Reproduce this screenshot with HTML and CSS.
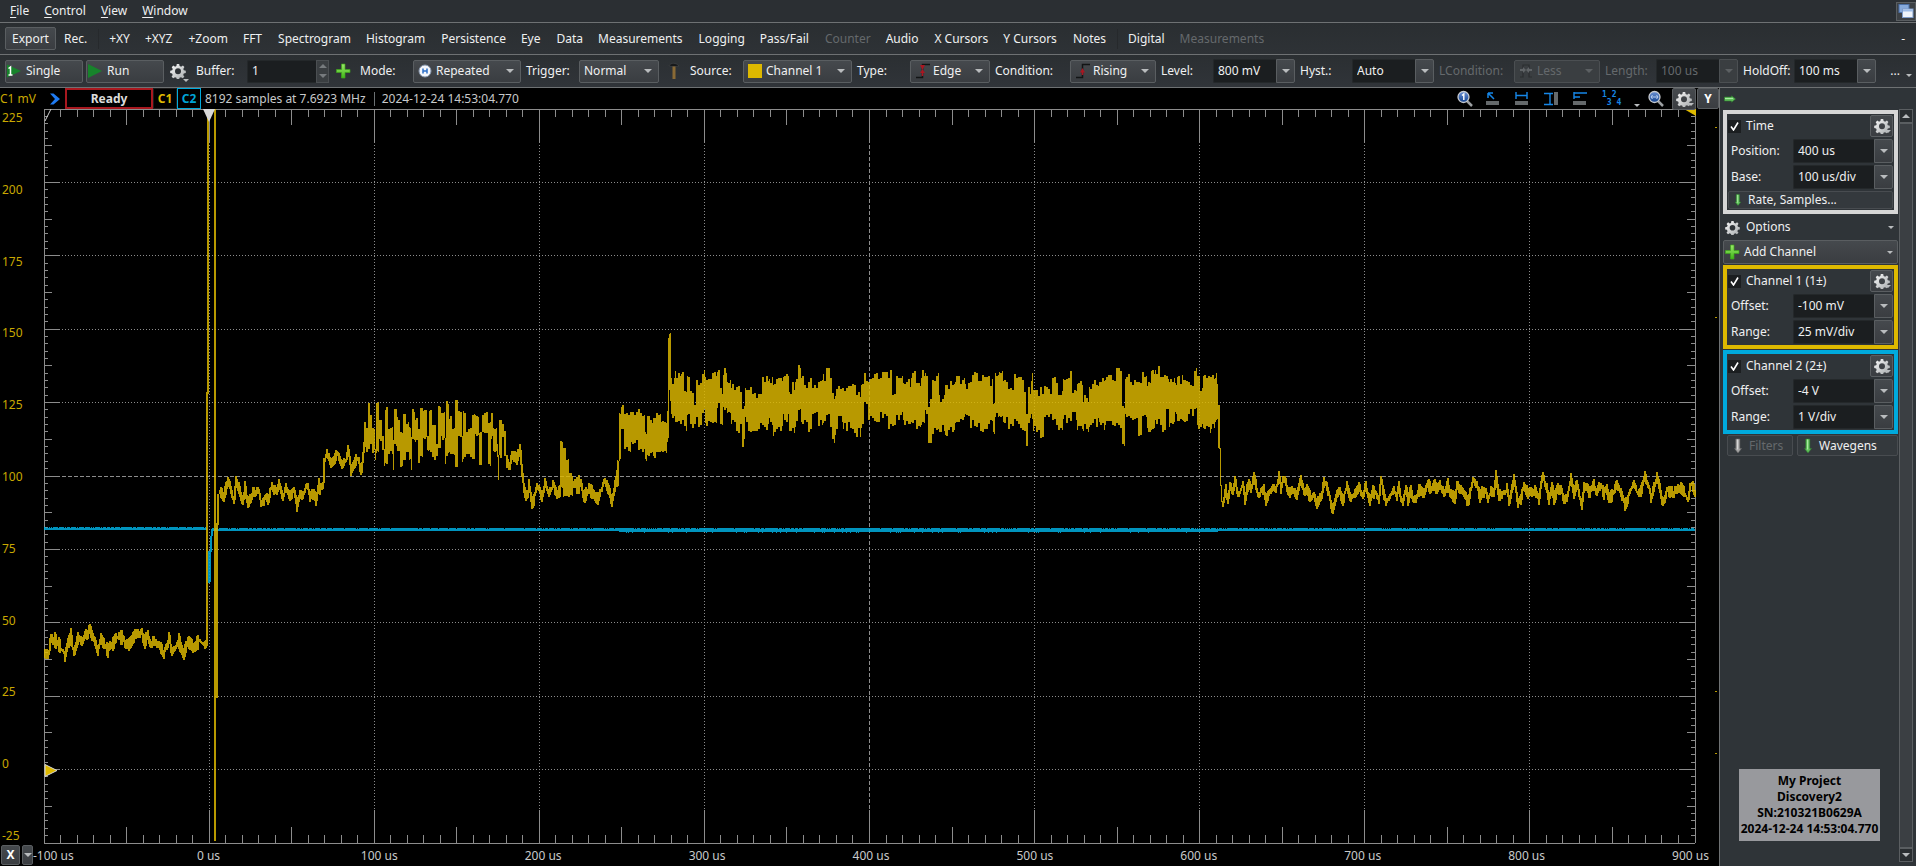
FILE: index.html
```html
<!DOCTYPE html>
<html lang="en">
<head>
<meta charset="utf-8">
<title>Scope</title>
<link rel="stylesheet" href="styles.css">
</head>
<body>
<svg class="defs" aria-hidden="true">
  <defs>
    <linearGradient id="metal" x1="0" y1="0" x2="1" y2="1"><stop offset="0" stop-color="#fafafa"/><stop offset="1" stop-color="#a4a8aa"/></linearGradient>
    <linearGradient id="leaf" x1="0" y1="0" x2="0" y2="1"><stop offset="0" stop-color="#9be86a"/><stop offset="1" stop-color="#3fb618"/></linearGradient>
    <linearGradient id="lens" x1="0" y1="0" x2="0" y2="1"><stop offset="0" stop-color="#6d93d6"/><stop offset="1" stop-color="#0f3f8c"/></linearGradient>
    <symbol id="gear" viewBox="0 0 16 16">
      <path d="M6.800 1h2.400l.4 2 1.500.7 1.800-1.200 1.500 1.600-1.100 1.800.5 1.400 2 .5v2.300l-2 .4-.6 1.500 1.200 1.700-1.700 1.600-1.700-1.100-1.500.6-.4 2H6.900l-.5-2-1.400-.6-1.800 1.100-1.600-1.600 1.100-1.800-.6-1.400-1.900-.4V7.800l2-.5.6-1.400L1.700 4.200l1.600-1.700 1.800 1.200 1.300-.6zM8 5.300a3 3 0 1 0 0 6 3 3 0 0 0 0-6z" fill="url(#metal)" fill-rule="evenodd"/>
    </symbol>
    <symbol id="drop" viewBox="0 0 6 3"><path d="M0 0h6L3 3z" fill="#b9bcbe"/></symbol>
    <symbol id="plus" viewBox="0 0 16 16"><path d="M6.500 1h3.500v5.500h5v3h-5V15H6.500V9.500h-5v-3h5z" fill="url(#leaf)" stroke="#3da51b" stroke-width=".7"/></symbol>
    <symbol id="arrow-down" viewBox="0 0 10 16"><path d="M2.800 1h4v9.500H8.500L5 15 1.500 10.500h1.300z" fill="#5fc05a" stroke="#2f7d2f" stroke-width=".6"/><path d="M4.600 1.500v10" stroke="#a9e9a2" stroke-width="1.200"/></symbol>
  </defs>
</svg>

<header>
  <nav class="menubar">
    <button><u>F</u>ile</button><button><u>C</u>ontrol</button><button><u>V</u>iew</button><button><u>W</u>indow</button>
    <button class="win-btn" aria-label="Windows"><svg width="16" height="16" viewBox="0 0 16 16"><rect x="1" y="1.500" width="10" height="8" fill="#86a9da" stroke="#4b6fa5"/><rect x="4.500" y="6" width="10.500" height="8.500" fill="#eef3fa" stroke="#7f9cc9"/><path d="M5 7.500h10" stroke="#9dbbe6" stroke-width="2"/></svg></button>
  </nav>
  <nav class="views">
    <button class="raised">Export</button><button>Rec.</button><i class="sep"></i>
    <button>+XY</button><button>+XYZ</button><button>+Zoom</button><button>FFT</button><button>Spectrogram</button><button>Histogram</button><button>Persistence</button><button>Eye</button><button>Data</button><button>Measurements</button><button>Logging</button><button>Pass/Fail</button><button disabled>Counter</button><button>Audio</button><button>X Cursors</button><button>Y Cursors</button><button>Notes</button><i class="sep"></i><button>Digital</button><button disabled>Measurements</button>
    <span class="more">-</span>
  </nav>
  <div class="controls">
    <button class="raised run"><svg width="16" height="16" viewBox="0 0 16 16"><path d="M1 1.500v13L15 8z" fill="#17832b"/><path d="M2.500 5.500l2-1.500v8M2.500 12h4" stroke="#fff" stroke-width="1.500" fill="none"/></svg>Single</button>
    <button class="raised run"><svg width="16" height="16" viewBox="0 0 16 16"><path d="M1 1v14L15 8z" fill="#17832b"/></svg>Run</button>
    <button class="icon gear"><svg width="16" height="16"><use href="#gear"/></svg><svg class="corner" width="6" height="3"><use href="#drop"/></svg></button>
    <label class="l-buffer" for="buffer">Buffer:</label>
    <span class="spin"><input id="buffer" value="1"><button aria-label="Step"><svg width="8" height="16" viewBox="0 0 8 16"><path d="M0 5h8L4 1zM0 11h8l-4 4z" fill="#777b7e"/></svg></button></span>
    <button class="icon add" aria-label="Add buffer"><svg width="16" height="16"><use href="#plus"/></svg></button>
    <label class="l-mode" for="mode">Mode:</label>
    <span class="pick w108"><svg width="14" height="14" viewBox="0 0 14 14"><circle cx="7" cy="7" r="6" fill="#f3f6fb" stroke="#8797ad"/><path d="M5 4.500v5M9 4.500v5M5 7h4" stroke="#2c6fc7" stroke-width="1.500"/></svg><select id="mode" class="iconic"><option>Repeated</option></select></span>
    <label class="l-trigger" for="trigger">Trigger:</label>
    <span class="pick w80"><select id="trigger"><option>Normal</option></select></span>
    <svg class="hammer" width="12" height="18" viewBox="0 0 12 18"><path d="M1 3.500C3 .5 8 .5 11 4L8 4.500H3z" fill="#17191b" stroke="#45484b" stroke-width=".6"/><path d="M4.500 4.500h3V17h-3z" fill="#8a6a35"/></svg>
    <label class="l-source" for="source">Source:</label>
    <span class="pick w109"><i class="swatch"></i><select id="source" class="iconic"><option>Channel 1</option></select></span>
    <label class="l-type" for="type">Type:</label>
    <span class="pick w80"><svg width="16" height="16" viewBox="0 0 16 16"><path d="M1 14.500h6.500v-13H15" fill="none" stroke="#121415" stroke-width="1.500"/><path d="M5 2l5 0-2.500 5zM7.500 6l2.500 4H8.300v3H6.700v-3H5z" fill="#a81722"/></svg><select id="type" class="iconic"><option>Edge</option></select></span>
    <label class="l-cond" for="cond">Condition:</label>
    <span class="pick w86"><svg width="16" height="16" viewBox="0 0 16 16"><path d="M1 14.500h6.500v-13H15" fill="none" stroke="#121415" stroke-width="1.500"/><path d="M7.500 5l2.500 4.500H8.300V12H6.700V9.500H5z" fill="#a81722"/></svg><select id="cond" class="iconic"><option>Rising</option></select></span>
    <label class="l-level" for="level">Level:</label>
    <span class="combo"><input id="level" value="800 mV"><button aria-label="Level list"></button></span>
    <label class="l-hyst" for="hyst">Hyst.:</label>
    <span class="combo"><input id="hyst" value="Auto"><button aria-label="Hysteresis list"></button></span>
    <label class="l-lcond off" for="lcond">LCondition:</label>
    <span class="pick w86 off"><svg width="14" height="16" viewBox="0 0 14 16"><path d="M1 14h3V9M4 5V2h6v3M10 9v5h3" fill="none" stroke="#2b2e30" stroke-width="1.200"/><path d="M1 6h3V4l3 3 3-3v2h3v2h-3v2L7 7l-3 3V8H1z" fill="#606467"/></svg><select id="lcond" class="iconic" disabled><option>Less</option></select></span>
    <label class="l-length off" for="length">Length:</label>
    <span class="combo off"><input id="length" value="100 us" disabled><button aria-label="Length list" disabled></button></span>
    <label class="l-hold" for="hold">HoldOff:</label>
    <span class="combo"><input id="hold" value="100 ms"><button aria-label="HoldOff list"></button></span>
    <button class="more dots">...<svg class="corner" width="6" height="3"><use href="#drop"/></svg></button>
  </div>
</header>

<main>
  <section class="scope">
    <div class="status">
      <span class="unit">C1 mV</span>
      <svg class="chev" width="12" height="14" viewBox="0 0 12 14"><path d="M1 1.500h3.500L11 7l-6.500 5.500H1L6 7z" fill="#1f7bf2"/></svg>
      <strong class="ready">Ready</strong>
      <b class="c1">C1</b><b class="c2">C2</b>
      <span class="info">8192 samples at 7.6923 MHz</span><i class="bar"></i><span>2024-12-24 14:53:04.770</span>
      <div class="tools">
        <button aria-label="Zoom one"><svg width="16" height="17" viewBox="0 0 16 17"><path d="M10 11l5 5" stroke="#9c9fa2" stroke-width="2.500"/><circle cx="6.500" cy="7" r="5.500" fill="url(#lens)" stroke="#c8cbd0" stroke-width="1.300"/><path d="M5 5.500L6.800 4v6" stroke="#fff" stroke-width="1.400" fill="none"/></svg></button>
        <button aria-label="Pointer"><svg width="14" height="14" viewBox="0 0 14 14"><rect y="9" width="13" height="4" fill="#65696b"/><path d="M2 1h5M2 1v5M2 1l6 6" stroke="#1687e8" stroke-width="1.500"/></svg></button>
        <button aria-label="Horizontal"><svg width="14" height="14" viewBox="0 0 14 14"><rect y="9" width="13" height="4" fill="#65696b"/><path d="M1 0v7M12 0v7M1 3.500h11" stroke="#1687e8" stroke-width="1.400"/></svg></button>
        <button aria-label="Vertical"><svg width="15" height="14" viewBox="0 0 15 14"><rect x="10" width="4" height="13" fill="#65696b"/><path d="M0 1.500h9M0 12.500h9M6 1.500v11" stroke="#1687e8" stroke-width="1.400"/></svg></button>
        <button aria-label="Pulse"><svg width="14" height="14" viewBox="0 0 14 14"><rect y="9" width="13" height="4" fill="#65696b"/><path d="M1 0v7M1 1h13M1 5h6" stroke="#1687e8" stroke-width="1.400"/></svg></button>
        <button class="nums"><span>1 2</span><span>&nbsp;3 4</span></button>
        <svg class="tri" width="6" height="3"><use href="#drop"/></svg>
        <button aria-label="Zoom fit"><svg width="16" height="17" viewBox="0 0 16 17"><path d="M10 11l5 5" stroke="#9c9fa2" stroke-width="2.500"/><circle cx="6.500" cy="7" r="5.500" fill="url(#lens)" stroke="#c8cbd0" stroke-width="1.300"/><path d="M3 7h7M4.500 5L3 7l1.500 2M8.500 5L10 7 8.500 9" stroke="#b9d0f2" fill="none"/></svg></button>
        <button class="raised sq"><svg width="16" height="16"><use href="#gear"/></svg><svg class="corner" width="6" height="3"><use href="#drop"/></svg></button>
        <button class="raised yb">Y</button>
      </div>
    </div>
    <div class="field">
      <div class="ylabels"><span>225</span><span>200</span><span>175</span><span>150</span><span>125</span><span>100</span><span>75</span><span>50</span><span>25</span><span>0</span><span>-25</span></div>
      <svg class="plot" viewBox="44 109 1652 735" preserveAspectRatio="none">
        <path id="grid" class="dots-line"/>
        <path id="mid" class="dash-line"/>
        <path id="ticks" class="tick"/>
        <path id="ch2" class="ch2"/>
        <g class="ch1"><path id="steep"/><path id="calm" class="thick"/></g>
        <path d="M45 121l6-12" stroke="#d0d0d0"/>
        <path d="M203 109h12l-6 13z" fill="#d8d8d8"/>
        <path d="M1684 109h12v7z" fill="#deb900"/>
        <path d="M45 764.500v12l12-6z" fill="#deb900" stroke="#d8d8d8"/>
      </svg>
      <svg class="marks" viewBox="0 0 23 735" preserveAspectRatio="none"><path d="M19 18.500h2M19 208.500h2M19 582.500h2M19 644.500h2" stroke="#b99a00"/></svg>
    </div>
    <div class="foot">
      <button class="raised xb">X</button><button class="raised xd" aria-label="X menu"><svg width="8" height="4"><use href="#drop"/></svg></button>
      <div class="xlabels"><span>-100 us</span><span>0 us</span><span>100 us</span><span>200 us</span><span>300 us</span><span>400 us</span><span>500 us</span><span>600 us</span><span>700 us</span><span>800 us</span><span>900 us</span></div>
    </div>
  </section>

  <aside>
    <button class="collapse" aria-label="Collapse"><svg width="12" height="8" viewBox="0 0 12 8"><path d="M.5 2H7.500V.8L11.500 4 7.500 7.200V6H.5z" fill="#5fc05a" stroke="#2f7d2f" stroke-width=".6"/><path d="M1 3.500h8" stroke="#a9e9a2"/></svg></button>
    <div class="side">
      <div class="panel">
        <fieldset class="box time">
          <div class="head"><input type="checkbox" id="t" checked><label for="t">Time</label><button class="raised sq"><svg width="16" height="16"><use href="#gear"/></svg><svg class="corner" width="6" height="3"><use href="#drop"/></svg></button></div>
          <div class="row"><label for="pos">Position:</label><span class="combo"><input id="pos" value="400 us"><button aria-label="Position list"></button></span></div>
          <div class="row"><label for="base">Base:</label><span class="combo"><input id="base" value="100 us/div"><button aria-label="Base list"></button></span></div>
          <button class="raised rate"><svg width="8" height="14"><use href="#arrow-down"/></svg>Rate, Samples...</button>
        </fieldset>
        <button class="wide"><svg width="15" height="15"><use href="#gear"/></svg>Options<svg class="end" width="6" height="3"><use href="#drop"/></svg></button>
        <button class="wide raised"><svg width="16" height="16"><use href="#plus"/></svg>Add Channel<svg class="end" width="6" height="3"><use href="#drop"/></svg></button>
        <fieldset class="box ch-a">
          <div class="head"><input type="checkbox" id="a" checked><label for="a">Channel 1 (1±)</label><button class="raised sq"><svg width="16" height="16"><use href="#gear"/></svg><svg class="corner" width="6" height="3"><use href="#drop"/></svg></button></div>
          <div class="row"><label for="ao">Offset:</label><span class="combo"><input id="ao" value="-100 mV"><button aria-label="Offset list"></button></span></div>
          <div class="row"><label for="ar">Range:</label><span class="combo"><input id="ar" value="25 mV/div"><button aria-label="Range list"></button></span></div>
        </fieldset>
        <fieldset class="box ch-b">
          <div class="head"><input type="checkbox" id="b" checked><label for="b">Channel 2 (2±)</label><button class="raised sq"><svg width="16" height="16"><use href="#gear"/></svg><svg class="corner" width="6" height="3"><use href="#drop"/></svg></button></div>
          <div class="row"><label for="bo">Offset:</label><span class="combo"><input id="bo" value="-4 V"><button aria-label="Offset list"></button></span></div>
          <div class="row"><label for="br">Range:</label><span class="combo"><input id="br" value="1 V/div"><button aria-label="Range list"></button></span></div>
        </fieldset>
        <div class="pair">
          <button class="raised filt" disabled><svg class="gray" width="10" height="16"><use href="#arrow-down"/></svg>Filters</button>
          <button class="raised wave"><svg width="10" height="16"><use href="#arrow-down"/></svg>Wavegens</button>
        </div>
        <div class="device">My Project<br>Discovery2<br>SN:210321B0629A<br>2024-12-24 14:53:04.770</div>
      </div>
      <div class="scroll"><button aria-label="Up"><svg width="8" height="4" viewBox="0 0 8 4"><path d="M0 4h8L4 0z" fill="#b9bcbe"/></svg></button><i></i><button aria-label="Down"><svg width="8" height="4"><use href="#drop"/></svg></button></div>
    </div>
  </aside>
</main>
<script src="plot.js"></script>
</body>
</html>
```
FILE: styles.css
```css
* { box-sizing: border-box; }
html, body { height: 100%; }
body {
  margin: 0;
  display: flex;
  flex-direction: column;
  background: #2b2f33;
  color: #eff0f1;
  font: 12px/16px "Noto Sans", "Open Sans", sans-serif;
  white-space: nowrap;
  overflow: hidden;
}
.defs { position: absolute; width: 0; height: 0; }
button, input, select { font: inherit; color: inherit; margin: 0; }
button { background: none; border: 0; padding: 0; display: inline-flex; align-items: center; white-space: nowrap; }
button:disabled, .off { color: #65696c; }
svg { flex: none; display: block; }
.raised {
  background: linear-gradient(#45494d, #3a3d41);
  border: 1px solid #5a5e61;
  border-radius: 2px;
}
.corner { position: absolute; right: 1px; bottom: 3px; }

.menubar, .views, .controls { display: flex; align-items: center; border-bottom: 1px solid #6e7173; }
.menubar { height: 23px; padding-left: 10px; gap: 15px; }
.menubar u { text-underline-offset: 2px; }
.win-btn { margin-left: auto; width: 20px; height: 19px; justify-content: center; background: #3d4145; border: 1px solid #5a5e61; }
.views { height: 32px; padding-left: 5px; background: linear-gradient(#2a2e31, #2e3236); }
.views button { height: 23px; padding: 0 7px; border: 1px solid transparent; }
.views button:nth-child(even) { padding-right: 6px; }
.views button.raised { border-color: #5a5e61; padding: 0 6px; }
.sep { width: 1px; height: 20px; background: #26292c; margin: 0 2px 0 4px; }
.more { margin-left: auto; padding-right: 11px; }

.controls { height: 33px; padding-left: 5px; background: linear-gradient(#2b2f32, #303439); }
.run { width: 78px; height: 23px; gap: 4px; margin-right: 3px; }
.icon { position: relative; height: 22px; }
.gear { width: 20px; margin-left: 3px; }
.gear .corner { bottom: 0; }
.l-buffer { width: 57px; padding-left: 6px; }
.spin { display: flex; width: 82px; height: 23px; }
.spin input, .combo input {
  flex: 1; min-width: 0; background: #1b1e20; border: 1px solid #24282a; border-right: 0;
  border-radius: 2px 0 0 2px; padding: 0 4px;
}
.spin button { width: 13px; justify-content: center; background: #3a3e41; border: 1px solid #4b4f52; }
.add { margin-left: 6px; width: 25px; }
.l-mode, .l-trigger, .l-source, .l-type { width: 53px; }
.l-cond { width: 75px; }
.l-level, .l-hyst { width: 52px; }
.l-lcond { width: 75px; }
.l-length { width: 51px; }
.l-hold { width: 51px; }
.pick { position: relative; display: flex; align-items: center; height: 23px; margin-right: 5px; }
.pick > svg, .swatch { position: absolute; left: 5px; pointer-events: none; }
.swatch { width: 14px; height: 14px; background: #deb900; }
.pick select, .combo button {
  background: url("data:image/svg+xml,%3Csvg xmlns='http://www.w3.org/2000/svg' width='8' height='4'%3E%3Cpath d='M0 0h8L4 4z' fill='%23b9bcbe'/%3E%3C/svg%3E") no-repeat right 6px center, linear-gradient(#45494d, #3a3d41);
  border: 1px solid #5a5e61;
}
.pick select { appearance: none; width: 100%; height: 23px; border-radius: 2px; padding: 0 0 0 4px; opacity: 1; }
.pick select.iconic { padding-left: 22px; }
.pick.off select, .combo.off button {
  background: url("data:image/svg+xml,%3Csvg xmlns='http://www.w3.org/2000/svg' width='8' height='4'%3E%3Cpath d='M0 0h8L4 4z' fill='%235c6063'/%3E%3C/svg%3E") no-repeat right 6px center, #3a3e41;
  border-color: #4b4f52;
}
.w80 { width: 80px; }
.w86 { width: 86px; }
.w108 { width: 108px; }
.w109 { width: 109px; }
.hammer { margin: 0 10px 0 4px; }
.combo { display: flex; width: 82px; height: 24px; margin-right: 5px; }
.combo button { width: 19px; background-position: center; border-radius: 0 2px 2px 0; }
.combo.off button { background-position: center; }
.dots { position: relative; padding-right: 16px; }
.dots .corner { right: 4px; bottom: 2px; }

main { flex: 1; min-height: 0; display: flex; }
.scope { flex: 1; min-width: 0; display: flex; flex-direction: column; background: #000; color: #c8cacb; }
.status { display: flex; align-items: center; height: 21px; }
.unit { width: 49px; color: #c9a800; }
.chev { margin-right: 4px; }
.ready { width: 88px; height: 21px; line-height: 17px; text-align: center; border: 2px solid #a8181f; color: #dcdcdc; }
.c1, .c2 { width: 24px; height: 21px; line-height: 19px; text-align: center; border: 1px solid #1c1c1c; color: #deb900; }
.c2 { border-color: #00aadd; color: #00a4d6; margin-right: 4px; }
.bar { width: 1px; height: 14px; background: #6b7072; margin: 0 7px 0 8px; }
.tools { margin-left: auto; display: flex; align-items: center; }
.tools > button { width: 29px; }
.tools .nums { flex-direction: column; width: 29px; align-items: flex-start; font: bold 8px/8px "DejaVu Sans Mono", monospace; color: #1687e8; }
.tools .tri { margin: 14px 8px 0 3px; }
.tools .sq { width: 24px; margin-left: -5px; }
.tools .yb { width: 22px; height: 21px; margin-left: 1px; }
.sq { position: relative; height: 22px; width: 23px; justify-content: center; }
.yb, .xb { justify-content: center; font-weight: bold; color: #fff; }
.field { flex: 1; min-height: 0; display: flex; }
.ylabels { width: 44px; padding: 1px 0 0 2px; display: flex; flex-direction: column; justify-content: space-between; color: #c9a800; }
.plot { flex: 1; min-width: 0; height: 100%; overflow: hidden; }
.marks { width: 23px; height: 100%; }
.plot path { fill: none; }
.plot path[fill] { fill: #deb900; }
.plot path[fill="#d8d8d8"] { fill: #d8d8d8; }
.dots-line, .dash-line, .tick, .ch1, .ch2 { shape-rendering: crispEdges; }
.dots-line { stroke: #8c8c8c; stroke-dasharray: 1 2; }
.dash-line { stroke: #8c8c8c; stroke-dasharray: 4 2; }
.tick { stroke: #8c8c8c; }
.ch1 { stroke: #deb900; opacity: .83; }
.thick { stroke-width: 2px; }
.ch2 { stroke: #00aedf; stroke-opacity: .85; }
.foot { height: 22px; display: flex; align-items: center; padding-left: 1px; }
.xb { width: 19px; height: 20px; }
.xd { width: 11px; height: 20px; margin-left: 2px; justify-content: center; }
.xlabels { flex: 1; display: flex; padding: 2px 10px 0 0; }
.xlabels span { flex: 1; }
.xlabels span:last-child { flex: none; }

aside { width: 197px; display: flex; flex-direction: column; border-left: 1px solid #6e7173; background: #2f3438; padding: 0 3px 4px 3px; }
.collapse { height: 21px; padding-left: 1px; }
.side { flex: 1; min-height: 0; display: flex; }
.panel { flex: 1; min-width: 0; display: flex; flex-direction: column; padding-top: 1px; }
.box { margin: 0 0 1px; padding: 0 1px; border: 4px solid #d6d6d6; min-width: 0; }
.box.ch-a { border-color: #deb900; margin-top: 1px; }
.box.ch-b { border-color: #00aadd; }
.head { display: flex; align-items: center; height: 24px; }
.head label { flex: 1; padding-left: 5px; }
input[type="checkbox"] {
  appearance: none; width: 13px; height: 13px;
  background: #1b1e20 url("data:image/svg+xml,%3Csvg xmlns='http://www.w3.org/2000/svg' width='9' height='9'%3E%3Cpath d='M1 4.500L3.500 8 8 .5' fill='none' stroke='%23fff' stroke-width='1.600'/%3E%3C/svg%3E") no-repeat center;
}
.row { display: flex; align-items: center; justify-content: space-between; height: 26px; padding-left: 3px; }
.row .combo { width: 100px; margin: 0; height: 24px; }
.rate { width: 100%; height: 18px; gap: 6px; padding-left: 5px; margin: 1px 0; background: #34393d; border-color: #484c50; display: flex; }
.wide { height: 24px; gap: 6px; padding: 0 4px 0 2px; margin-bottom: 1px; }
.wide.raised { padding-left: 0; margin-bottom: 0; gap: 4px; }
.end { margin-left: auto; }
.pair { display: flex; gap: 4px; padding-left: 4px; }
.pair button { height: 21px; background: #34393d; border-color: #484c50; gap: 6px; padding-left: 5px; }
.filt { width: 66px; }
.pair .wave { flex: 1; }
.gray { filter: grayscale(1); }
.device { margin: auto auto 21px 16px; width: 141px; padding: 4px 0; background: #98999d; color: #000; font-weight: bold; text-align: center; }
.scroll { width: 14px; display: flex; flex-direction: column; margin-left: 1px; background: #2a2e31; }
.scroll button { height: 14px; justify-content: center; border: 1px solid #5a5e61; }
.scroll i { flex: 1; border: 1px solid #5a5e61; background: #3b3f43; }
```
FILE: plot.js
```js
// Small seeded generator so that the noise is the same on every load.
let seed = 41;
function rnd() {
  seed = (seed * 1103515245 + 12345) % 2147483648;
  return seed / 2147483648;
}

const L = 44, R = 1695, T = 109, B = 843;
const put = (id, d) => document.getElementById(id).setAttribute('d', d);

// Graticule
let grid = '', mid = '', ticks = `M${L}.5 ${T}V${B}M${R}.5 ${T}V${B}M${L} ${T}.5H${R}M${L} ${B}.5H${R}`;
for (let i = 1; i < 10; i++) {
  const x = Math.floor(L + i * 165.1) + 0.5, y = Math.floor(T + i * 73.4) + 0.5;
  const v = `M${x} ${T}V${B}`, h = `M${L} ${y}H${R}`;
  if (i === 5) mid += v + h; else grid += v + h;
}
for (let i = 1; i < 100; i++) {
  const x = Math.floor(L + i * 16.51) + 0.5, y = Math.floor(T + i * 7.34) + 0.5;
  const a = i % 10 === 0 ? 33 : i % 5 === 0 ? 16 : 8;
  const b = i % 10 === 0 ? 16 : i % 5 === 0 ? 8 : 4;
  ticks += `M${x} ${T}v${a}M${x} ${B}v${-a}M${L} ${y}h${b}M${R} ${y}h${-b}`;
}
put('grid', grid);
put('mid', mid);
put('ticks', ticks);

// One vertical bar per column; each bar is stretched to touch the previous one.
let prev = null;
function col(x, top, bot) {
  top = Math.round(top); bot = Math.round(bot);
  let t = top, b = bot;
  if (prev) {
    if (t > prev[1]) t = prev[1] - 1;
    if (b < prev[0]) b = prev[0] + 1;
  }
  prev = [top, bot];
  return `M${x}.5 ${t}V${b}`;
}

// Wandering line through keys [x, y] with noise of size amp.
function wander(keys, amp) {
  let d = '', up = 2, down = 2;
  for (let k = 0; k < keys.length - 1; k++) {
    const [x0, y0] = keys[k], [x1, y1] = keys[k + 1];
    for (let x = x0; x < x1; x++) {
      if (x % 2 === 0) {
        up = 2 + (rnd() - 0.2) * amp;
        down = 2 + (rnd() - 0.2) * amp;
      }
      const y = y0 + (y1 - y0) * (x - x0) / (x1 - x0);
      d += col(x, y - up, y + down);
    }
  }
  return d;
}

// Filled band through keys [x, top, bottom], held in steps of two columns.
function band(keys, end, jit) {
  let d = '', a = 0, b = 0;
  for (let k = 0; k < keys.length; k++) {
    const stop = k + 1 < keys.length ? keys[k + 1][0] : end;
    for (let x = keys[k][0]; x < stop; x++) {
      if (x % 2 === 0) { a = rnd() ** 2 * jit; b = rnd() * jit; }
      d += col(x, keys[k][1] + a, keys[k][2] - b);
    }
  }
  return d;
}

// Short random excursions around a level, passing through the given marks.
function quiet(x0, x1, level, amp, marks) {
  const keys = [];
  let x = x0, side = 1;
  while (x < x1) {
    side = rnd() < 0.75 ? -side : side;
    keys.push([x, level + side * rnd() * amp]);
    x += 2 + Math.floor(rnd() * 3);
  }
  keys.push([x1, level]);
  marks.forEach(([mx, my]) => {
    let best = keys[0];
    keys.forEach(k => { if (Math.abs(k[0] - mx) < Math.abs(best[0] - mx)) best = k; });
    best[1] = my;
  });
  return wander(keys, 6);
}

let calm = '', steep = '';
calm += wander([[44,650],[48,652],[49,640],[54,640],[59,647],[64,655],[67,642],[70,636],[73,655],[77,640],[82,643],[85,635],[90,630],[93,640],[97,652],[100,638],[107,650],[115,638],[122,638],[128,645],[134,636],[141,633],[144,642],[147,635],[150,644],[157,642],[163,653],[168,640],[172,652],[178,641],[183,655],[187,640],[192,645],[199,641],[203,645],[207,641]], 8);
prev = null;
steep += 'M206.500 392V644M207.500 109V644M208.500 109V394M214.500 109V841M215.500 109V841M216.500 523V698M217.500 494V698M218.500 494V525';
calm += quiet(219, 320, 494, 8, [[227,482],[236,480],[247,504],[262,500],[273,484],[279,482],[295,507],[306,485],[316,503],[319,483]]);
calm += wander([[320,487],[322,487],[323,463],[326,451],[329,463],[334,458],[336,452],[341,467],[345,460],[347,446],[350,472],[355,460],[358,458],[360,474],[363,445],[364,430]], 6);
steep += band([
  [364,420,448],[366,426,453],[368,403,453],[370,415,447],[372,427,453],[375,450,463],[376,402,455],[379,420,442],[382,436,454],[384,455,469],[385,406,466],[388,427,455],[393,440,471],[394,409,448],[397,417,453],[400,431,468],[403,412,462],[406,422,455],[409,427,463],[411,436,474],[412,409,440],[415,417,442],[418,429,467],[420,406,459],[423,409,440],[427,435,453],[429,410,452],[432,425,460],[436,440,458],[438,406,452],[441,412,440],[445,438,466],[446,400,457],[449,415,456],[452,427,457],[455,399,469],[458,409,438],[462,438,463],[463,409,460],[466,428,457],[472,414,462],[475,415,437],[479,431,467],[482,415,436],[484,410,437],[488,422,467],[491,413,440],[493,428,455],[497,444,461],[498,455,483],[499,420,458],[502,423,438],[504,430,457]
], 506, 4);
calm += wander([[506,465],[509,464],[512,452],[515,462],[518,452],[519,446],[521,470],[523,489],[526,498],[528,484],[531,505],[533,500],[536,484],[541,495],[544,482],[548,494],[552,486],[556,492],[560,490]], 7);
steep += band([[560,441,488],[563,447,497],[566,459,498],[569,473,498],[573,478,490],[576,474,496]], 580, 3);
calm += wander([[580,485],[583,498],[588,488],[591,491],[598,499],[601,488],[604,481],[608,492],[611,500],[614,486],[616,477],[617,470]], 7);
steep += band([[617,460,487],[619,412,462],[621,405,432],[624,411,450],[628,412,454],[631,412,444],[638,409,450],[642,415,452],[645,432,462],[647,414,456],[650,420,454],[653,415,458],[656,412,455],[661,420,454],[667,408,443]], 668, 4);
steep += band([
  [668,337,441],[669,333,393],[670,333,410],[671,378,423],[675,371,429],[681,369,429],[684,388,434],[687,372,418],[690,385,430],[694,402,430],[696,378,426],[698,382,428],[702,367,416],[705,374,430],[712,372,423],[717,368,408],[720,386,430],[723,367,412],[727,376,417],[731,384,428],[736,383,434],[740,392,430],[742,406,448],[745,388,426],[748,387,440],[752,392,436],[758,386,432],[762,376,432],[769,374,426],[773,382,437],[776,378,434],[783,374,422],[789,390,439],[792,382,434],[795,374,428],[798,365,417],[801,375,430],[804,383,424],[808,378,435],[812,384,420],[818,380,426],[823,374,424],[826,368,422],[830,378,430],[832,392,445],[835,389,437],[838,386,424],[843,386,431],[850,384,436],[856,390,437],[861,378,428],[864,373,410],[868,377,420],[874,373,423],[880,371,420],[888,370,430],[892,390,430],[896,372,420],[903,379,428],[911,370,426],[916,378,430],[921,370,428],[925,367,415],[928,398,444],[932,378,436],[936,372,430],[939,394,433],[945,384,437],[950,378,433],[955,376,426],[965,382,423],[970,374,428],[974,372,428],[980,375,434],[986,376,433],[990,378,426],[993,403,437],[995,373,420],[999,370,419],[1003,380,425],[1008,388,433],[1014,374,424],[1020,377,434],[1024,388,438],[1026,406,449],[1028,386,426],[1031,373,422],[1033,390,434],[1040,386,443],[1044,386,422],[1052,375,425],[1058,390,435],[1063,378,424],[1068,371,426],[1072,385,420],[1077,378,430],[1083,395,432],[1089,380,427],[1099,376,431],[1105,375,426],[1112,376,428],[1116,368,428],[1120,370,430],[1122,403,453],[1125,374,421],[1132,380,426],[1138,382,439],[1142,372,423],[1147,382,434],[1151,370,432],[1155,366,424],[1160,374,430],[1162,374,439],[1166,375,410],[1169,378,428],[1175,383,418],[1177,375,425],[1183,380,426],[1188,380,416],[1194,368,417],[1197,376,434],[1200,386,430],[1203,374,434],[1211,374,430],[1215,373,424],[1217,384,423],[1218,403,451],[1219,403,452],[1220,450,491],[1221,490,507]
], 1222, 9);
calm += quiet(1222, 1695, 492, 9, [[1223,504],[1229,484],[1234,482],[1255,477],[1277,476],[1284,477],[1300,478],[1316,505],[1323,482],[1331,510],[1380,477],[1384,503],[1407,504],[1433,482],[1472,478],[1496,475],[1512,478],[1517,504],[1543,475],[1570,478],[1582,504],[1615,482],[1624,505],[1645,477],[1656,478],[1692,484]]);
put('calm', calm);
put('steep', steep);

// Channel 2: almost flat, with a dip at the trigger.
let e = '';
for (let x = 44; x < 1695; x++) {
  const busy = x > 618 && x < 1218;
  if (x > 206 && x < 213) continue;
  const y = x < 207 ? 527 : 528;
  const k = x % 2 ? 0.5 : rnd();
  e += `M${x}.5 ${k < 0.3 ? y + 1 : y}V${busy ? (k > 0.8 ? y + 5 : y + 4) : y + 3}`;
}
e += 'M208.500 551V583M209.500 551V583M210.500 536V582M211.500 529V552M212.500 528V536';
put('ch2', e);
```
